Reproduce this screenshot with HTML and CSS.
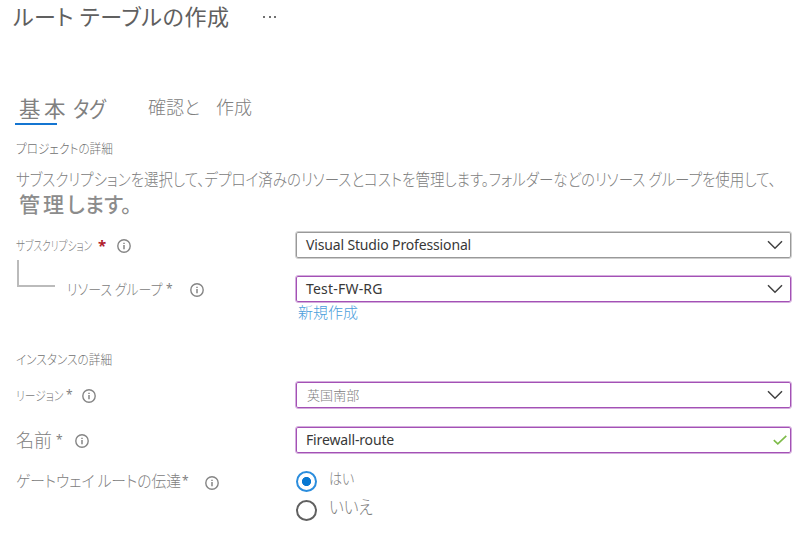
FILE: index.html
```html
<!DOCTYPE html>
<html lang="ja">
<head>
<meta charset="utf-8">
<title>ルート テーブルの作成</title>
<link rel="stylesheet" href="styles.css">
</head>
<body>
<svg class="defs" aria-hidden="true">
  <symbol id="info" viewBox="0 0 14 14"><circle cx="7" cy="7" r="6.2" fill="none" stroke="#858585" stroke-width="1.4"/><path d="M7 6v4.2M7 3.7v1.4" stroke="#858585" stroke-width="1.5"/></symbol>
  <symbol id="chevron" viewBox="0 0 16 10"><path d="M1 1.2l7 7 7-7" fill="none" stroke="#414141" stroke-width="1.5"/></symbol>
</svg>
<main class="page">
  <header class="title-row"><h1 class="title">ルート テーブルの作成</h1><span class="more"><i></i><i></i><i></i></span></header>
  <nav class="tabs">
    <a class="tab basic">基本</a><a class="tab tags">タグ</a><a class="tab review">確認と</a><a class="tab create">作成</a>
  </nav>
  <h2 class="section project">プロジェクトの詳細</h2>
  <p class="description"><span class="line-one">サブスクリプションを選択して、デプロイ済みのリソースとコストを管理します。フォルダーなどのリソース グループを使用して、</span><span class="line-two"><b>管理</b>します。</span></p>
  <div class="field subscription">
    <div class="label"><span class="name">サブスクリプション</span><span class="star required">*</span><svg class="info"><use href="#info"/></svg></div>
    <div class="control neutral"><span class="value">Visual Studio Professional</span><svg class="chevron"><use href="#chevron"/></svg></div>
  </div>
  <div class="field group">
    <div class="label"><span class="branch"></span><span class="name">リソース グループ</span><span class="star">*</span><svg class="info"><use href="#info"/></svg></div>
    <div class="control"><span class="value">Test-FW-RG</span><svg class="chevron"><use href="#chevron"/></svg></div>
  </div>
  <a class="new-link">新規作成</a>
  <h2 class="section instance">インスタンスの詳細</h2>
  <div class="field region">
    <div class="label"><span class="name">リージョン</span><span class="star">*</span><svg class="info"><use href="#info"/></svg></div>
    <div class="control"><span class="value jp">英国南部</span><svg class="chevron"><use href="#chevron"/></svg></div>
  </div>
  <div class="field route-name">
    <div class="label"><span class="name">名前</span><span class="star">*</span><svg class="info"><use href="#info"/></svg></div>
    <div class="control"><span class="value">Firewall-route</span><svg class="check" viewBox="0 0 14 10"><path d="M.8 5.2l4 3.7L13.3.8" fill="none" stroke="#7dbb48" stroke-width="1.6"/></svg></div>
  </div>
  <div class="field gateway">
    <div class="label"><span class="name">ゲートウェイ ルートの伝達</span><span class="star">*</span><svg class="info"><use href="#info"/></svg></div>
    <div class="options">
      <div class="option yes"><span class="radio selected"></span><span class="option-text">はい</span></div>
      <div class="option no"><span class="radio"></span><span class="option-text">いいえ</span></div>
    </div>
  </div>
</main>
</body>
</html>
```
FILE: styles.css
```css
* { box-sizing: border-box; }
body { margin: 0; background: #fff; color: #808080; font-family: "Noto Sans CJK JP", sans-serif; font-weight: 300; font-feature-settings: "palt"; }
.defs { display: none; }
.page { width: 810px; height: 538px; display: flex; flex-direction: column; overflow: hidden; }
h1, h2, p { margin: 0; font-weight: 300; }
span, a { white-space: nowrap; }
.title-row { height: 34px; flex: none; display: flex; align-items: center; padding-left: 13px; }
.title { width: 250px; height: 34px; font-size: 22px; line-height: 30px; letter-spacing: .65px; font-weight: 400; color: #606060; white-space: nowrap; }
.more { display: flex; gap: 3px; }
.more i { width: 2px; height: 2px; background: #707070; }
.more i + i { margin-left: .5px; }
.tabs { height: 33px; flex: none; margin-top: 57px; padding-left: 15px; display: flex; }
.tab { font-size: 18px; height: 33px; line-height: 30px; }
.basic { width: 42px; padding-left: 4px; height: 34px; font-size: 21.5px; line-height: 34px; letter-spacing: 3.5px; font-weight: 400; border-bottom: 2px solid #1475d1; }
.tags { width: 76px; margin-left: 16px; font-size: 22px; line-height: 33px; font-weight: 400; transform: scaleX(.84); transform-origin: left; }
.review { width: 68px; margin-left: -1px; }
.section { height: 20px; flex: none; padding-left: 16px; font-size: 13px; line-height: 20px; color: #707070; transform: scaleX(.895); transform-origin: 16px 0; }
.project { margin-top: 14px; }
.description { height: 60px; flex: none; padding: 9px 0 0 16px; }
.description span { display: block; }
.line-one { width: max-content; font-size: 17px; line-height: 24px; transform: scaleX(.852); transform-origin: left; }
.line-two { margin-top: 2px; padding-left: 3px; font-size: 21px; line-height: 21px; font-weight: 500; color: #8c8c8c; }
.line-two b { font-weight: 500; letter-spacing: 3px; }
.field { flex: none; display: flex; align-items: center; height: 28px; }
.label { width: 295px; height: 28px; padding-left: 16px; display: flex; align-items: center; font-size: 12px; flex: none; }
.info { width: 14px; height: 14px; flex: none; position: relative; top: 1px; }
.name { flex: none; padding-bottom: 2px; transform: scaleX(.74); transform-origin: left; }
.star { flex: none; font-family: "Noto Sans", sans-serif; font-size: 12px; font-weight: 400; line-height: 16px; }
.star.required { color: #b0202b; font-weight: 700; font-size: 15px; padding-bottom: 1px; }
.control { width: 497px; height: 28px; border: 1px solid #d4addd; box-shadow: inset 0 0 0 1px #a351b5; border-radius: 3px; display: flex; align-items: center; justify-content: space-between; padding: 0 8px 0 10px; font-family: "Noto Sans", sans-serif; font-size: 14px; font-weight: 400; color: #383838; }
.control.neutral { border-color: #cecece; box-shadow: inset 0 0 0 1px #999; }
.value { line-height: 22px; letter-spacing: -.15px; }
.neutral .value { letter-spacing: -.15px; }
.group .value { letter-spacing: .2px; }
.value.jp { font-family: "Noto Sans CJK JP", sans-serif; font-size: 13px; letter-spacing: .1px; padding-left: 1px; font-weight: 300; color: #808080; }
.chevron { width: 16px; height: 10px; }
.check { width: 14px; height: 10px; margin-right: -4px; }
.subscription { margin-top: 13px; }
.subscription .name { width: 82px; font-size: 13px; }
.subscription .star { width: 19px; }
.group { margin-top: 16px; }
.group .label { padding-left: 17px; }
.branch { width: 38px; height: 27px; border-left: 2px solid #bbb; border-bottom: 2px solid #bbb; margin: -31px 12px 0 0; }
.group .name { width: 99px; font-size: 15px; transform: scaleX(.86); }
.group .star { width: 24px; }
.new-link { height: 20px; flex: none; margin: -1px 0 0 298px; font-size: 15px; line-height: 20px; color: #4b9edb; }
.instance { margin-top: 27px; }
.region { margin-top: 12px; }
.region .name { width: 50px; font-size: 13px; transform: scaleX(.83); }
.region .star { width: 16px; }
.route-name { margin-top: 17px; }
.route-name .name { width: 40px; font-size: 18px; transform: none; }
.route-name .star { width: 19px; }
.gateway { height: 60px; margin-top: 12px; align-items: flex-start; }
.gateway .label { padding-top: 2px; }
.gateway .name { width: 166px; font-size: 16px; transform: scaleX(.92); }
.gateway .star { width: 23px; }
.gateway .info { top: 2px; }
.options { padding-left: 1px; }
.option { display: flex; align-items: center; height: 29px; }
.radio { width: 21px; height: 21px; border: 2px solid #606060; border-radius: 50%; margin-right: 12px; position: relative; top: .5px; }
.selected { border-color: #2b8ddd; background: radial-gradient(circle, #0878d2 4.2px, transparent 5px); }
.option-text { padding-bottom: 7px; transform: scaleX(.87); transform-origin: left; }
.yes { font-size: 15px; }
.no { font-size: 18px; }
```
